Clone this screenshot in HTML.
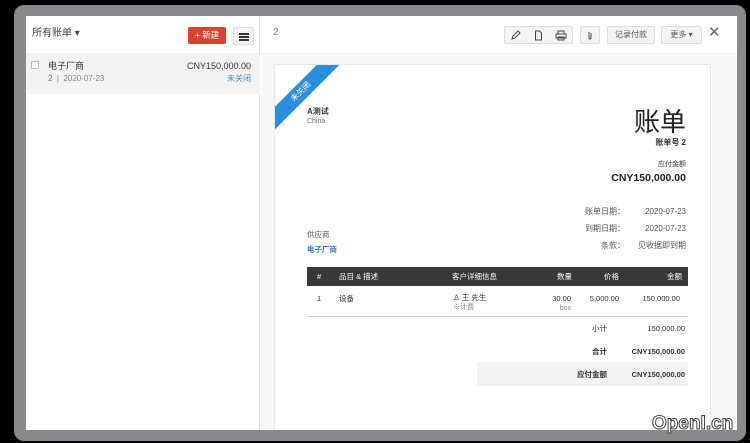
<!DOCTYPE html>
<html><head><meta charset="utf-8"><style>
*{margin:0;padding:0;box-sizing:border-box}
body{width:750px;height:443px;background:#000;position:relative;overflow:hidden;font-family:"Liberation Sans","Noto Sans CJK SC",sans-serif;font-size:8px;color:#333;line-height:1.2}
.frame{position:absolute;left:14px;top:5px;width:732px;height:436px;background:#8a8a8c;border-radius:10px}
.win{position:absolute;left:26px;top:16px;width:711px;height:414px;background:#fff;overflow:hidden}
.left{position:absolute;left:0;top:0;width:234px;height:414px;background:#fff;border-right:1px solid #e3e3e3}
.right{position:absolute;left:235px;top:0;right:0;height:414px;background:#f7f7f7}
.abs{position:absolute;white-space:nowrap}
.btn{position:absolute;border:1px solid #ddd;background:#f4f4f4;border-radius:2px;height:18px;top:10px;font-size:8px;color:#555;display:flex;align-items:center;justify-content:center}
.card{position:absolute;left:13px;top:48px;width:437px;height:380px;background:#fff;border:1px solid #e8e8e8;overflow:hidden}
.r{text-align:right}
</style></head><body>
<div class="frame"></div>
<div class="win">
 <div class="left">
  <div class="abs" style="left:6px;top:12px;font-size:10px;color:#444">所有账单 ▾</div>
  <div class="abs" style="left:162px;top:11px;width:38px;height:17px;background:#d9432f;border-radius:2px;color:#fff;font-size:8.5px;text-align:center;line-height:17px">+ 新建</div>
  <div class="abs" style="left:207px;top:11px;width:21px;height:18px;border:1px solid #ddd;background:#f4f4f4;border-radius:2px">
   <div class="abs" style="left:5px;top:5px;width:10px;height:1.5px;background:#333"></div>
   <div class="abs" style="left:5px;top:8px;width:10px;height:1.5px;background:#333"></div>
   <div class="abs" style="left:5px;top:11px;width:10px;height:1.5px;background:#333"></div>
  </div>
  <div class="abs" style="left:0;top:37px;width:234px;height:41px;background:#f3f3f3"></div>
  <div class="abs" style="left:5px;top:45px;width:8px;height:8px;border:1px solid #bbb;background:#fff;border-radius:1px"></div>
  <div class="abs" style="left:22px;top:45px;font-size:9px;color:#333">电子厂商</div>
  <div class="abs" style="left:22px;top:58px;font-size:8px;color:#888"><span style="color:#3b8ad9">2</span> &nbsp;|&nbsp; 2020-07-23</div>
  <div class="abs r" style="right:8px;top:45px;font-size:9px;color:#333">CNY150,000.00</div>
  <div class="abs r" style="right:8px;top:58px;font-size:8px;color:#3b8ad9">未关闭</div>
 </div>
 <div class="right">
  <div class="abs" style="left:0;top:0;right:0;height:38px;background:#fff;border-bottom:1px solid #eee"></div>
  <div class="abs" style="left:12px;top:11px;font-size:10px;color:#888">2</div>
  <div class="btn" style="left:243px;width:69px"></div>
  <svg class="abs" style="left:249px;top:14px" width="11" height="11" viewBox="0 0 11 11" fill="none" stroke="#444" stroke-width="1"><path d="M2 9l1-3 5-5 2 2-5 5z"/></svg>
  <svg class="abs" style="left:272px;top:14px" width="11" height="11" viewBox="0 0 11 11" fill="none" stroke="#444" stroke-width="1"><path d="M2.5 1h4l2 2v7h-6z"/></svg>
  <svg class="abs" style="left:294px;top:14px" width="12" height="11" viewBox="0 0 12 11" fill="none" stroke="#444" stroke-width="1"><path d="M3 4V1h6v3M1 4h10v4H1zM3 7h6v3H3z"/></svg>
  <div class="btn" style="left:319px;width:20px"><svg width="8" height="10" viewBox="0 0 8 10" fill="none" stroke="#444"><path d="M3 2v6a1 1 0 0 0 2 0V3"/></svg></div>
  <div class="btn" style="left:346px;width:48px">记录付款</div>
  <div class="btn" style="left:400px;width:41px">更多 ▾</div>
  <div class="abs" style="left:447px;top:8px;font-size:15px;color:#666">✕</div>
  <div class="card">
   <div class="abs" style="left:-26px;top:19px;width:104px;height:16px;background:#2d8fdc;color:#fff;font-size:8px;text-align:center;line-height:16px;transform:rotate(-45deg)">未关闭</div>
   <div class="abs" style="left:32px;top:42px;font-size:8px;font-weight:bold;color:#333">A测试</div>
   <div class="abs" style="left:32px;top:53px;font-size:7px;color:#666">China</div>
   <div class="abs r" style="right:24px;top:44px;font-size:26px;line-height:1;color:#222">账单</div>
   <div class="abs r" style="right:24px;top:73px;font-size:8px;font-weight:bold">账单号 2</div>
   <div class="abs r" style="right:24px;top:96px;font-size:7px">应付金额</div>
   <div class="abs r" style="right:24px;top:107px;font-size:10.5px;font-weight:bold;color:#222">CNY150,000.00</div>
   <div class="abs r" style="right:85px;top:142px;font-size:8px;color:#555">账单日期：</div>
   <div class="abs r" style="right:24px;top:142px;font-size:8px;color:#555">2020-07-23</div>
   <div class="abs r" style="right:85px;top:159px;font-size:8px;color:#555">到期日期：</div>
   <div class="abs r" style="right:24px;top:159px;font-size:8px;color:#555">2020-07-23</div>
   <div class="abs r" style="right:85px;top:176px;font-size:8px;color:#555">条款：</div>
   <div class="abs r" style="right:24px;top:176px;font-size:8px;color:#555">见收据即到期</div>
   <div class="abs" style="left:32px;top:165px;font-size:7.5px;color:#555">供应商</div>
   <div class="abs" style="left:32px;top:180px;font-size:7.5px;color:#2d7fd6;font-weight:bold">电子厂商</div>
   <div class="abs" style="left:32px;top:202px;width:381px;height:19px;background:#383838;color:#fff;font-size:7.5px">
    <span class="abs" style="left:10px;top:5px">#</span>
    <span class="abs" style="left:32px;top:5px">品目 &amp; 描述</span>
    <span class="abs" style="left:145px;top:5px">客户详细信息</span>
    <span class="abs" style="left:250px;top:5px">数量</span>
    <span class="abs" style="left:297px;top:5px">价格</span>
    <span class="abs" style="right:6px;top:5px">金额</span>
   </div>
   <div class="abs" style="left:42px;top:229px;font-size:7.5px">1</div>
   <div class="abs" style="left:64px;top:229px;font-size:7.5px">设备</div>
   <div class="abs" style="left:178px;top:228px;font-size:7.5px">♙ 王 先生</div>
   <div class="abs" style="left:178px;top:239px;font-size:7px;color:#888">※计费</div>
   <div class="abs r" style="right:139px;top:229px;font-size:7.5px">30.00</div>
   <div class="abs r" style="right:139px;top:240px;font-size:7px;color:#888">box</div>
   <div class="abs r" style="right:91px;top:229px;font-size:7.5px">5,000.00</div>
   <div class="abs r" style="right:30px;top:229px;font-size:7.5px">150,000.00</div>
   <div class="abs" style="left:32px;top:251px;width:381px;height:1px;background:#ccc"></div>
   <div class="abs r" style="right:103px;top:259px;font-size:7.5px">小计</div>
   <div class="abs r" style="right:25px;top:259px;font-size:7.5px">150,000.00</div>
   <div class="abs r" style="right:103px;top:282px;font-size:7.5px;font-weight:bold">合计</div>
   <div class="abs r" style="right:25px;top:282px;font-size:7.5px;font-weight:bold">CNY150,000.00</div>
   <div class="abs" style="left:202px;top:297px;width:211px;height:24px;background:#f3f3f3"></div>
   <div class="abs r" style="right:103px;top:305px;font-size:7.5px;font-weight:bold">应付金额</div>
   <div class="abs r" style="right:25px;top:305px;font-size:7.5px;font-weight:bold">CNY150,000.00</div>
  </div>
 </div>
</div>
<div class="abs" style="left:652px;top:413px;font-size:19px;font-weight:bold;color:#fff;-webkit-text-stroke:1px #444;letter-spacing:0">OpenI.cn</div>
</body></html>
